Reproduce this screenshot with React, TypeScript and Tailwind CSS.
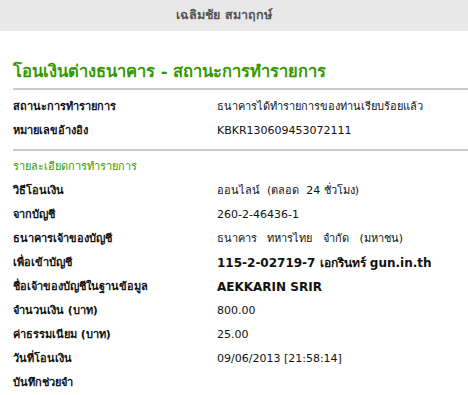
const summary = [
  { label: "สถานะการทำรายการ", value: "ธนาคารได้ทำรายการของท่านเรียบร้อยแล้ว" },
  { label: "หมายเลขอ้างอิง", value: "KBKR130609453072111" },
];

const details = [
  { label: "วิธีโอนเงิน", value: "ออนไลน์  (ตลอด  24 ชั่วโมง)" },
  { label: "จากบัญชี", value: "260-2-46436-1" },
  { label: "ธนาคารเจ้าของบัญชี", value: "ธนาคาร   ทหารไทย   จำกัด   (มหาชน)" },
  { label: "เพื่อเข้าบัญชี", value: "115-2-02719-7 เอกรินทร์ gun.in.th", bold: true },
  { label: "ชื่อเจ้าของบัญชีในฐานข้อมูล", value: "AEKKARIN SRIR", bold: true },
  { label: "จำนวนเงิน (บาท)", value: "800.00" },
  { label: "ค่าธรรมเนียม (บาท)", value: "25.00" },
  { label: "วันที่โอนเงิน", value: "09/06/2013 [21:58:14]" },
  { label: "บันทึกช่วยจำ", value: "" },
];

function Row({ label, value, bold }: { label: string; value: string; bold?: boolean }) {
  return (
    <div className="flex h-[24px] items-center text-[11px] text-[#111]">
      <div className="w-[204px] shrink-0 font-bold">{label}</div>
      <div className={bold ? "whitespace-pre font-bold text-[12px]" : "whitespace-pre"}>{value}</div>
    </div>
  );
}

export default function App() {
  return (
    <div className="w-[468px] h-[395px] overflow-hidden bg-white font-['DejaVu_Sans',Tahoma,sans-serif]">
      <div className="h-[31px] bg-[#e8e8e8] flex items-center justify-center pr-[20px] text-[12.5px] font-bold text-[#555]">
        เฉลิมชัย สมาฤกษ์
      </div>
      <div className="pl-[13px]">
        <h1 className="mt-[30px] h-[22px] leading-[22px] text-[16.5px] font-semibold text-[#339900]">
          โอนเงินต่างธนาคาร - สถานะการทำรายการ
        </h1>
        <div className="mt-[5px] h-[2px] bg-[#cccccc]" />
        <div className="mt-[5px]">
          {summary.map((r) => (
            <Row key={r.label} {...r} />
          ))}
        </div>
        <div className="mt-[6px] h-[2px] bg-[#cccccc]" />
        <div className="mt-[8px] h-[16px] leading-[16px] text-[11px] text-[#339900]">รายละเอียดการทำรายการ</div>
        <div className="mt-[4px]">
          {details.map((r) => (
            <Row key={r.label} {...r} />
          ))}
        </div>
      </div>
    </div>
  );
}
